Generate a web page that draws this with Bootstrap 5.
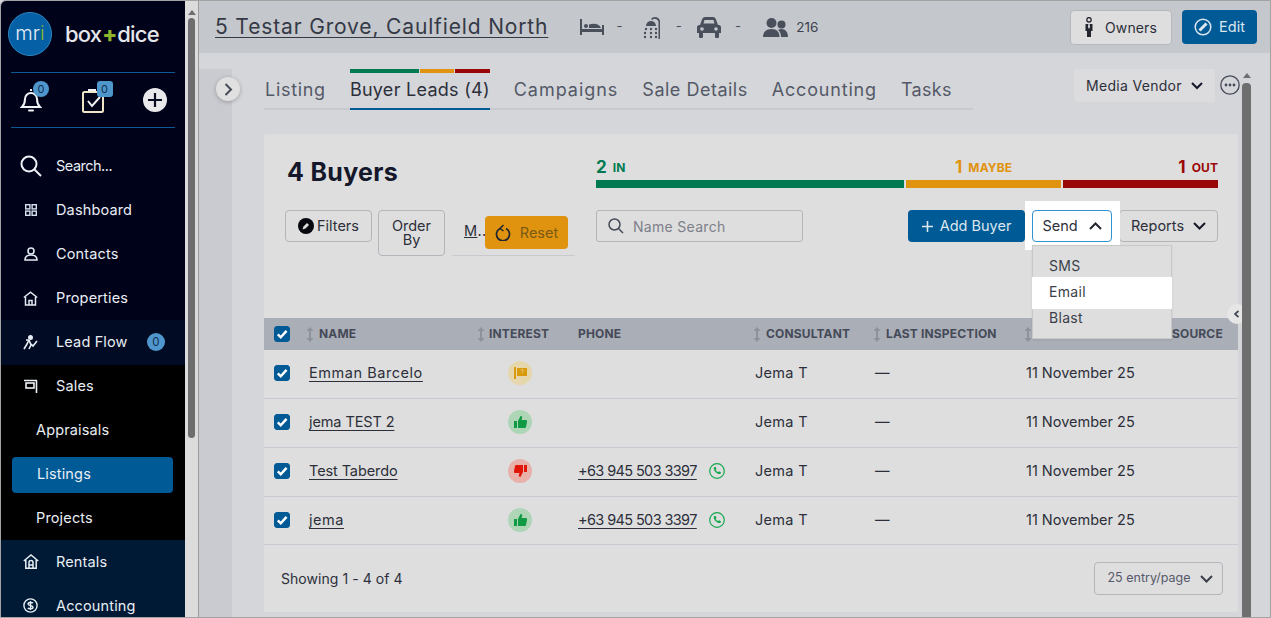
<!DOCTYPE html>
<html lang="en">
<head>
  <meta charset="UTF-8" />
  <title>5 Testar Grove - Buyer Leads</title>
  <link href="https://cdn.jsdelivr.net/npm/bootstrap@5.3.0/dist/css/bootstrap.min.css" rel="stylesheet"/>
  <style>
    html, body { height: 100%; }
    body {
      overflow: hidden;
      background: #d4d6da;
      font-family: "Inter", "Open Sans", sans-serif;
      font-size: 14.5px;
      letter-spacing: .3px;
      color: #2c2f3a;
    }
    svg { display: block; flex-shrink: 0; }
    .app-frame { height: 618px; border: 1px solid #a3a3a3; border-top-left-radius: 6px; overflow: hidden; }

    /* sidebar */
    .side-col { width: 184px; flex-shrink: 0; background: #00021a; color: #e9eef4; overflow: hidden; letter-spacing: .15px; }
    .brand-row { height: 71px; padding: 11px 0 0 7px; }
    .logo-disc {
      width: 44px; height: 44px; border-radius: 50%; background: #0660a6; border: 1px solid #2a86c0;
      color: #e6eef5; font-size: 20px; font-weight: 300; letter-spacing: 0; line-height: 40px; text-align: center;
    }
    .logo-disc em, .logo-word em { font-style: normal; color: #8fb52b; }
    .logo-word { font-size: 22px; font-weight: 500; letter-spacing: -.85px; margin-left: 13px; margin-top: -2px; color: #e4e6ea; }
    .logo-word em { font-weight: 800; margin: 0 1px; }
    .quick-row { margin: 0 10px; height: 56px; border-top: 1px solid #0b5a93; border-bottom: 1px solid #0b5a93; padding: 0 8px 0 9px; }
    .quick-item { position: relative; }
    .quick-count {
      position: absolute; top: -7px; right: -7px; min-width: 16px; height: 16px; border-radius: 50%;
      background: #4f96cc; color: #12314f; font-size: 11px; line-height: 16px; text-align: center; letter-spacing: 0;
    }
    .quick-count.sq { border-radius: 3px; right: -8px; }
    .side-list { padding-top: 16px; }
    .side-link { height: 44px; padding-left: 19px; gap: 15px; color: #e9eef4; text-decoration: none; }
    .side-link .ico-slot { width: 21px; display: flex; justify-content: center; }
    .side-link.flow-row { height: 45px; padding-bottom: 1px; background: #020b24; }
    .side-link.sub { padding-left: 35px; }
    .side-link.find-row { letter-spacing: -.5px; }
    .side-black { background: #000; }
    .side-black .side-link:first-child { height: 43px; padding-bottom: 1px; }
    .side-blue { background: #001a35; }
    .side-blue .side-link:first-child { height: 43px; }
    .side-blue .side-link:last-child { padding-top: 1px; }
    .side-active { height: 36px; margin: 5px 12px 3px 11px; padding: 0 0 2px 25px; background: #005a96; border-radius: 4px; color: #e9eef4; text-decoration: none; }
    .lead-count { width: 18px; height: 18px; border-radius: 50%; background: #4f96cc; color: #12314f; font-size: 11.5px; line-height: 18px; text-align: center; margin-left: auto; margin-right: 20px; letter-spacing: 0; }
    .side-scroll { width: 14px; flex-shrink: 0; background: #dcdcdc; border-right: 1px solid #9b9b9b; padding: 9px 3px 0 3px; }
    .scroll-up { width: 0; height: 0; border-left: 4px solid transparent; border-right: 4px solid transparent; border-bottom: 5px solid #6e6e6e; margin: 0 auto 3px; }
    .scroll-thumb { background: #6e6e6e; border-radius: 4px; }
    .side-scroll .scroll-thumb { height: 420px; }

    /* header */
    .main-col { min-width: 0; position: relative; }
    .top-bar { height: 52px; background: #c4c7cc; padding: 0 13px 0 16px; flex-shrink: 0; }
    .addr-link { font-size: 21px; letter-spacing: .85px; color: #353946; margin-right: 32px; text-decoration-thickness: 1px; text-underline-offset: 3px; }
    .stat-dash { color: #4a4f5c; font-size: 13px; }
    .dash-bed { margin: 0 20px 0 12px; }
    .dash-shower { margin: 0 15px 0 13px; }
    .dash-car { margin: 0 22px 0 14px; }
    .top-stat { color: #3c4150; font-size: 13.5px; margin-left: 8px; letter-spacing: 0; }
    .owner-btn { height: 35px; width: 102px; background: #dedede; border: 1px solid #b5b7bd; border-radius: 4px; color: #2c2f3a; font-size: 14px; gap: 12px; padding: 0; letter-spacing: .1px; }
    .edit-btn { height: 34px; width: 75px; background: #005a96; border: 0; border-radius: 4px; color: #dbe6ef; font-size: 14.5px; gap: 7px; padding: 0; margin-left: 10px; }

    /* body */
    .page-strip { width: 33px; flex-shrink: 0; margin-top: 16px; background: #c9cbd0; position: relative; }
    .strip-toggle {
      position: absolute; top: 8px; left: 17px; width: 24px; height: 24px; border-radius: 50%;
      background: #e0e0e0; box-shadow: 0 1px 4px rgba(0,0,0,.25); display: flex; align-items: center; justify-content: center;
    }
    .page-body { padding: 0 0 0 32px; min-width: 0; }
    .tab-row { height: 81px; padding-top: 16px; width: 976px; }
    .tab-list { width: 709px; height: 41px; border-bottom: 2px solid #c8cace; gap: 24px; }
    .tab-item { color: #545967; font-size: 18px; letter-spacing: .42px; text-decoration: none; padding-top: 7px; height: 41px; }
    .tab-item:nth-child(1) { letter-spacing: .7px; margin-left: 1px; }
    .tab-item:nth-child(2) { letter-spacing: .27px; }
    .tab-item:nth-child(3) { letter-spacing: .97px; }
    .tab-item:nth-child(4) { letter-spacing: .5px; }
    .tab-item:nth-child(5) { letter-spacing: .82px; }
    .tab-item:nth-child(6) { letter-spacing: .3px; }
    .tab-item.on { color: #2c2f3a; border-bottom: 2px solid #005a96; position: relative; }
    .tab-colors { position: absolute; top: 0; left: 0; right: 0; height: 4px; gap: 1px; }
    .tab-colors i { display: block; height: 4px; }
    .vendor-btn { width: 141px; height: 33px; background: #dcdcde; border-radius: 3px; font-size: 14px; margin-left: auto; gap: 9px; color: #2c2f3a; }
    .dots-ico { margin: 6px 0 0 5px; }

    .buyers-card { width: 974px; height: 478px; background: #dedede; border-radius: 2px; position: relative; }
    .buyers-head { padding: 22px 20px 0 23px; height: 76px; }
    .buyers-title { width: 309px; font-size: 25px; font-weight: 700; color: #15182a; line-height: 32px; margin: 0; letter-spacing: .3px; }
    .score-box { flex: 1; }
    .score-label { height: 24px; font-size: 12px; font-weight: 700; letter-spacing: .1px; }
    .score-label b { font-size: 17px; font-weight: 700; margin-right: 6px; }
    .score-bar { height: 8px; }
    .c-in { color: #007a50; } .c-maybe { color: #e0930f; } .c-out { color: #9a0707; }
    .b-in { background: #007a50; } .b-maybe { background: #e0930f; } .b-out { background: #9a0707; }
    .tool-row { padding: 0 20px 0 21px; height: 108px; }
    .plain-btn { background: transparent; border: 1px solid #b3b5bb; border-radius: 4px; color: #2c2f3a; font-size: 14.5px; padding: 0; line-height: 1; }
    .btn-filters { width: 87px; height: 32px; gap: 3px; }
    .btn-order { width: 67px; height: 46px; margin-left: 6px; }
    .saved-slot { width: 123px; height: 46px; margin-left: 7px; border-bottom: 1px solid #c9cad0; padding: 10px 0 0 12px; position: relative; color: #2c2f3a; }
    .reset-btn {
      position: absolute; left: 33px; top: 6px; width: 83px; height: 33px; background: #e0930f; border: 0; border-radius: 4px;
      color: #7b5b15; gap: 9px; padding: 0; font-size: 14.5px;
    }
    .search-wrap { width: 207px; height: 32px; margin-left: 21px; border: 1px solid #b3b5bb; border-radius: 3px; padding-left: 11px; gap: 9px; color: #7d808a; font-size: 14px; }
    .add-btn { width: 117px; height: 32px; background: #005a96; border: 0; border-radius: 4px; color: #dbe6ef; gap: 7px; padding: 0; margin-left: auto; font-size: 14.5px; }
    .send-halo { background: #fff; padding: 9px 8px 8px 7px; margin: -9px 0 -8px; position: relative; z-index: 3; }
    .send-btn { width: 80px; height: 32px; background: #fff; border: 1px solid #2f93cf; border-radius: 4px; color: #2c2f3a; gap: 11px; padding: 0; font-size: 14.5px; }
    .reports-btn { width: 99px; height: 32px; gap: 9px; margin-left: -1px; }
    .send-menu.dropdown-menu {
      top: 44px; left: 7px; width: 140px; min-width: 0; height: 94px; padding: 7px 0; margin: 0; z-index: 4; background: #dedede;
      border: 1px solid #c9c9c9; border-radius: 0; box-shadow: 0 1px 2px rgba(0,0,0,.08); font-size: 14px;
    }
    .send-menu .dropdown-item { height: 26px; line-height: 26px; padding: 0 0 0 16px; color: #3a3e4a; position: relative; }
    .send-menu .dropdown-item.lit::before { content: ""; position: absolute; left: -1px; right: -1px; top: -2px; bottom: -4px; background: #fff; }
    .send-menu .dropdown-item.lit span { position: relative; }

    .lead-table { margin: 0; table-layout: fixed; width: 974px; border-collapse: separate; border-spacing: 0; --bs-table-bg: transparent; --bs-table-color: #2c2f3a; font-size: 14.5px; }
    .lead-table thead th {
      height: 32px; padding: 0 0 0 6px; background: #aaaeb7; color: #454a58; font-size: 12px; font-weight: 700; letter-spacing: .15px; border: 0; vertical-align: middle; white-space: nowrap;
    }
    .lead-table tbody td { height: 49px; padding: 0 0 2px 9px; border-bottom: 1px solid #c8cad2; vertical-align: middle; }
    .lead-table tbody tr:last-child td { height: 48px; }
    .lead-table thead th.chk-col, .lead-table tbody td.chk-col { padding: 0 0 0 10px; }
    .lead-table tbody td.chk-col { padding-bottom: 2px; }
    .lead-table .form-check-input { width: 16px; height: 16px; margin: 0; display: block; border-radius: 3px; background-color: #005a96; border-color: #005a96; }
    .lead-table .form-check-input:checked[type=checkbox] {
      --bs-form-check-bg-image: url("data:image/svg+xml,%3csvg xmlns='http://www.w3.org/2000/svg' viewBox='0 0 20 20'%3e%3cpath fill='none' stroke='%23fff' stroke-width='3.6' d='M4 10.500l4.200 4.200L16.500 5.500'/%3e%3c/svg%3e");
    }
    .lead-table a { color: #2c2f3a; text-underline-offset: 3px; text-decoration-thickness: 1px; }
    .lead-table a.phone-link { letter-spacing: -.62px; }
    .lead-table a.name-wide { letter-spacing: .55px; }
    .lead-table a.name-tight { letter-spacing: -.1px; }
    .lead-table tbody td.phone-cell { padding-left: 8px; }
    .date-cell { letter-spacing: 0; }
    .sort-head { gap: 5px; }
    .th-sort-mid { margin-left: 1px; }
    .th-interest { gap: 4px; }
    .th-phone { padding-left: 8px !important; }
    .th-source { padding-left: 13px !important; }
    .mood { width: 24px; height: 24px; border-radius: 50%; margin-left: 29px; }
    .mood-up { background: #add5b6; } .mood-down { background: #e9afa9; } .mood-maybe { background: #e5d6ab; }
    .list-foot { height: 67px; padding: 0 15px 0 17px; font-size: 14px; letter-spacing: .05px; }
    .page-size { width: 129px; height: 33px; border: 1px solid #b3b5bb; border-radius: 4px; font-size: 12.5px; color: #55596a; gap: 10px; letter-spacing: 0; padding-left: 4px; }
    .edge-knob { position: absolute; top: 170px; right: -9px; width: 20px; height: 20px; border-radius: 50%; background: #e6e6e6; display: flex; align-items: center; padding-left: 7px; }

    .page-scroll { position: absolute; top: 72px; right: 19px; width: 9px; bottom: 0; }
    .page-scroll .scroll-up { border-left-width: 4px; margin: 0 auto 5px; }
    .page-scroll .scroll-thumb { height: 540px; border-radius: 4px 4px 0 0; }
  </style>
</head>
<body>
<div class="app-frame d-flex">

  <aside class="side-col">
    <div class="brand-row d-flex align-items-start">
      <div class="logo-disc">mr<em>i</em></div>
      <div class="logo-word pt-2">box<em>+</em>dice</div>
    </div>
    <div class="quick-row d-flex justify-content-between align-items-center">
      <div class="quick-item">
        <svg width="22" height="25" viewBox="0 0 22 25" fill="none" stroke="#f1f2f4" stroke-width="2"><path d="M11 1v2M2 19c2-2 3-4 3-8a6 6 0 0 1 12 0c0 4 1 6 3 8z"/><path d="M9 22.500h4" stroke-linecap="round"/></svg>
        <span class="quick-count">0</span>
      </div>
      <div class="quick-item">
        <svg width="24" height="25" viewBox="0 0 24 25" fill="none" stroke="#f1f2f4" stroke-width="2"><rect x="2" y="4" width="20" height="20" rx="1.500" stroke="#efe3c8"/><path d="M7 13l4 5 8-9"/><path d="M8 4V2h6v2"/></svg>
        <span class="quick-count sq">0</span>
      </div>
      <svg width="24" height="24" viewBox="0 0 24 24"><circle cx="12" cy="12" r="12" fill="#e9e9ec"/><path d="M12 5v14M5 12h14" stroke="#0a0d20" stroke-width="2.200"/></svg>
    </div>

    <nav class="side-list">
      <a class="side-link find-row d-flex align-items-center" href="#"><span class="ico-slot"><svg width="22" height="22" viewBox="0 0 22 22" fill="none" stroke="#eef1f5" stroke-width="2"><circle cx="9" cy="9" r="7.500"/><path d="M14.500 14.500L21 21"/></svg></span>Search...</a>
      <a class="side-link d-flex align-items-center" href="#"><span class="ico-slot"><svg width="12" height="12" viewBox="0 0 12 12" fill="none" stroke="#d6e3ee" stroke-width="1.400"><rect x=".7" y=".7" width="4.200" height="4.200"/><rect x="7.100" y=".7" width="4.200" height="4.200"/><rect x=".7" y="7.100" width="4.200" height="4.200"/><rect x="7.100" y="7.100" width="4.200" height="4.200"/></svg></span>Dashboard</a>
      <a class="side-link d-flex align-items-center" href="#"><span class="ico-slot"><svg width="14" height="14" viewBox="0 0 14 14" fill="none" stroke="#e2ebf3" stroke-width="1.600"><circle cx="7" cy="4" r="3"/><path d="M1 13c0-3 2-5 6-5s6 2 6 5z"/></svg></span>Contacts</a>
      <a class="side-link d-flex align-items-center" href="#"><span class="ico-slot"><svg width="15" height="15" viewBox="0 0 15 15" fill="none" stroke="#e2ebf3" stroke-width="1.500"><path d="M.8 6.500L7.500 1.200l6.700 5.300"/><path d="M2.500 6v8h10V6"/><path d="M6 14V9.500h3V14"/></svg></span>Properties</a>
      <a class="side-link flow-row d-flex align-items-center" href="#"><span class="ico-slot"><svg width="15" height="15" viewBox="0 0 15 15" fill="none" stroke="#e8edf3" stroke-width="1.600"><circle cx="7.500" cy="2.500" r="1.700" fill="#e8edf3"/><path d="M6 5L4 9l-3 5M6 5l2 5-2 4M6 5h-3M8 9l2 2 4-5"/></svg></span>Lead Flow<span class="lead-count">0</span></a>
      <div class="side-black">
        <a class="side-link d-flex align-items-center" href="#"><span class="ico-slot"><svg width="14" height="14" viewBox="0 0 14 14" fill="none" stroke="#eef1f5" stroke-width="1.600"><path d="M0 1.500h13M12.500 1.500V14"/><rect x="2" y="4" width="8" height="5"/></svg></span>Sales</a>
        <a class="side-link sub d-flex align-items-center" href="#">Appraisals</a>
        <a class="side-active d-flex align-items-center" href="#">Listings</a>
        <a class="side-link sub d-flex align-items-center" href="#">Projects</a>
      </div>
      <div class="side-blue">
        <a class="side-link d-flex align-items-center" href="#"><span class="ico-slot"><svg width="16" height="15" viewBox="0 0 16 15" fill="none" stroke="#e6edf3" stroke-width="1.500"><path d="M.8 7L8 1l7.200 6"/><path d="M2.800 6v8.200h10.400V6"/><path d="M6 14V8.500a2 2 0 0 1 4 0V14M6 11h4"/></svg></span>Rentals</a>
        <a class="side-link d-flex align-items-center" href="#"><span class="ico-slot"><svg width="15" height="15" viewBox="0 0 15 15" fill="none" stroke="#e6edf3" stroke-width="1.400"><circle cx="7.500" cy="7.500" r="6.600"/><path d="M10 5.200C9.400 4.400 5 4 5 6s5 1 5 3.200-4.600 1.600-5.200.6M7.500 3v9"/></svg></span>Accounting</a>
      </div>
    </nav>
  </aside>

  <div class="side-scroll">
    <div class="scroll-up"></div>
    <div class="scroll-thumb"></div>
  </div>

  <main class="main-col flex-grow-1 d-flex flex-column">
    <header class="top-bar d-flex align-items-center">
      <a href="#" class="addr-link">5 Testar Grove, Caulfield North</a>
      <svg width="24" height="16" viewBox="0 0 24 16" fill="#4a4f5c"><path d="M0 0h2v10h20V6h2v10h-2v-3H2v3H0z"/><circle cx="6" cy="7" r="2"/><path d="M9 5.500c5-1.500 10-1 12 3.500H9z"/></svg>
      <span class="stat-dash dash-bed">-</span>
      <svg width="20" height="24" viewBox="0 0 20 24" fill="#4a4f5c"><path d="M17 24V7a5 5 0 0 0-9-3l1.200 1a3.600 3.600 0 0 1 6.300 2v17z"/><path d="M3 11a5 5 0 0 1 10 0z"/><circle cx="3" cy="14" r="1.200"/><circle cx="8" cy="14" r="1.200"/><circle cx="13" cy="14" r="1.200"/><circle cx="2" cy="18" r="1.200"/><circle cx="8" cy="18" r="1.200"/><circle cx="13" cy="18" r="1.200"/><circle cx="2" cy="22" r="1.200"/><circle cx="8" cy="22" r="1.200"/><circle cx="13" cy="22" r="1.200"/></svg>
      <span class="stat-dash dash-shower">-</span>
      <svg width="24" height="21" viewBox="0 0 24 21" fill="#4a4f5c"><path d="M5 2.500C5.500 1 6.500 0 8 0h8c1.500 0 2.500 1 3 2.500L21 8h-18z"/><path d="M2 8c-1 0-2 1-2 2.500V16h2v4a1 1 0 0 0 1 1h2a1 1 0 0 0 1-1v-4h12v4a1 1 0 0 0 1 1h2a1 1 0 0 0 1-1v-4h2v-5.500C24 9 23 8 22 8z"/><circle cx="5" cy="12" r="1.800" fill="#c4c7cc"/><circle cx="19" cy="12" r="1.800" fill="#c4c7cc"/><path d="M7.500 3h9l1 3.500h-11z" fill="#c4c7cc"/></svg>
      <span class="stat-dash dash-car">-</span>
      <svg width="25" height="19" viewBox="0 0 25 19" fill="#4a4f5c"><circle cx="8.500" cy="5" r="5"/><circle cx="18.500" cy="6.500" r="4"/><path d="M0 19c0-5 3-8 8.500-8s8 3 8 8z"/><path d="M18 19c0-3-1-5.500-3-7 1-.6 2.300-1 3.500-1 4 0 6.500 3 6.500 8z"/></svg>
      <span class="top-stat">216</span>
      <button type="button" class="btn owner-btn d-flex align-items-center justify-content-center ms-auto">
        <svg width="8" height="20" viewBox="0 0 8 20" fill="#23262f"><circle cx="4" cy="2.800" r="2.200" fill="none" stroke="#23262f" stroke-width="1.300"/><path d="M.5 7h7v7H6v6H2v-6H.5z"/><path d="M3.400 7h1.200l.4 3-1 2-1-2z" fill="#dedede"/></svg>
        Owners
      </button>
      <button type="button" class="btn edit-btn d-flex align-items-center justify-content-center">
        <svg width="18" height="18" viewBox="0 0 18 18" fill="none" stroke="#dbe6ef" stroke-width="1.500"><circle cx="9" cy="9" r="7.800"/><path d="M5.500 12.500L12.500 5.500" stroke-width="3"/></svg>
        Edit
      </button>
    </header>

    <div class="d-flex flex-grow-1" style="min-height:0">
      <div class="page-strip">
        <span class="strip-toggle"><svg width="9" height="13" viewBox="0 0 9 13" fill="none" stroke="#454a58" stroke-width="2"><path d="M1.500 1l5.500 5.500-5.500 5.500"/></svg></span>
      </div>
      <div class="page-body flex-grow-1">
        <div class="tab-row d-flex align-items-start">
          <nav class="tab-list d-flex">
            <a class="tab-item" href="#">Listing</a>
            <a class="tab-item on" href="#">Buyer Leads (4)
              <span class="tab-colors d-flex">
                <i class="b-in" style="width: 50%"></i><i class="b-maybe" style="width: 25%"></i><i class="b-out" style="width: 25%"></i>
              </span>
            </a>
            <a class="tab-item" href="#">Campaigns</a>
            <a class="tab-item" href="#">Sale Details</a>
            <a class="tab-item" href="#">Accounting</a>
            <a class="tab-item" href="#">Tasks</a>
          </nav>
          <div class="vendor-btn d-flex align-items-center justify-content-center">Media Vendor
            <svg width="12" height="8" viewBox="0 0 12 8" fill="none" stroke="#15182a" stroke-width="2"><path d="M1 1l5 5 5-5"/></svg>
          </div>
          <svg class="dots-ico" width="20" height="20" viewBox="0 0 20 20"><circle cx="10" cy="10" r="9.200" fill="none" stroke="#454a58" stroke-width="1.300"/><circle cx="6" cy="10" r="1.400" fill="#454a58"/><circle cx="10" cy="10" r="1.400" fill="#454a58"/><circle cx="14" cy="10" r="1.400" fill="#454a58"/></svg>
        </div>

        <section class="buyers-card">
          <div class="buyers-head d-flex">
            <h2 class="buyers-title">4 Buyers</h2>
            <div class="score-box">
              <div class="d-flex" style="gap: 2px">
                <div style="width: 308px"><div class="score-label c-in d-flex align-items-center"><b>2</b> IN</div><div class="score-bar b-in"></div></div>
                <div style="width: 155px"><div class="score-label c-maybe d-flex align-items-center justify-content-center"><b>1</b> MAYBE</div><div class="score-bar b-maybe"></div></div>
                <div style="width: 155px"><div class="score-label c-out d-flex align-items-center justify-content-end"><b>1</b> OUT</div><div class="score-bar b-out"></div></div>
              </div>
            </div>
          </div>

          <div class="tool-row d-flex align-items-start">
            <button type="button" class="btn plain-btn btn-filters d-flex align-items-center justify-content-center">
              <svg width="16" height="16" viewBox="0 0 16 16"><circle cx="8" cy="8" r="8" fill="#07080f"/><path d="M4.500 11.500l1-3 3.500-3.500 2 2-3.500 3.500z" fill="#dedede"/></svg>
              Filters
            </button>
            <button type="button" class="btn plain-btn btn-order">Order<br>By</button>
            <div class="saved-slot">
              <a href="#" style="color:#2c2f3a">M</a>..
              <button type="button" class="btn reset-btn d-flex align-items-center justify-content-center">
                <svg width="16" height="17" viewBox="0 0 16 17" fill="none" stroke="#23262f" stroke-width="1.700"><path d="M5 4.500a6.500 6.500 0 1 0 6 0"/><path d="M8.500 1L5 4.500 8.500 7" stroke-width="1.500"/></svg>
                Reset
              </button>
            </div>
            <div class="search-wrap d-flex align-items-center">
              <svg width="16" height="16" viewBox="0 0 16 16" fill="none" stroke="#454a58" stroke-width="1.500"><circle cx="6.500" cy="6.500" r="5.500"/><path d="M10.500 10.500L15 15"/></svg>
              Name Search
            </div>
            <button type="button" class="btn add-btn d-flex align-items-center justify-content-center">
              <svg width="11" height="11" viewBox="0 0 11 11" fill="none" stroke="#dbe6ef" stroke-width="1.600"><path d="M5.500 0v11M0 5.500h11"/></svg>
              Add Buyer
            </button>
            <div class="send-halo">
              <button type="button" class="btn send-btn d-flex align-items-center justify-content-center">Send
                <svg width="13" height="8" viewBox="0 0 13 8" fill="none" stroke="#23262f" stroke-width="2"><path d="M1 7l5.500-5.500L12 7"/></svg>
              </button>
              <ul class="dropdown-menu show send-menu">
                <li><a class="dropdown-item" href="#"><span>SMS</span></a></li>
                <li><a class="dropdown-item lit" href="#"><span>Email</span></a></li>
                <li><a class="dropdown-item" href="#"><span>Blast</span></a></li>
              </ul>
            </div>
            <button type="button" class="btn plain-btn reports-btn d-flex align-items-center justify-content-center">Reports
              <svg width="13" height="8" viewBox="0 0 13 8" fill="none" stroke="#15182a" stroke-width="2"><path d="M1 1l5.500 5.500L12 1"/></svg>
            </button>
          </div>

          <table class="table lead-table">
            <colgroup>
              <col style="width: 36px"><col style="width: 170px"><col style="width: 100px"><col style="width: 176px">
              <col style="width: 120px"><col style="width: 151px"><col style="width: 142px"><col style="width: 79px">
            </colgroup>
            <thead>
              <tr>
                <th class="chk-col"><input class="form-check-input" type="checkbox" checked aria-label="All"></th>
                <th><span class="sort-head d-flex align-items-center"><svg width="8" height="15" viewBox="0 0 8 15" fill="#8e929c"><path d="M4 0l3.500 4h-2.500v7h2.500L4 15 .5 11H3V4H.5z"/></svg>NAME</span></th>
                <th><span class="sort-head th-sort-mid th-interest d-flex align-items-center"><svg width="8" height="15" viewBox="0 0 8 15" fill="#8e929c"><path d="M4 0l3.500 4h-2.500v7h2.500L4 15 .5 11H3V4H.5z"/></svg>INTEREST</span></th>
                <th class="th-phone">PHONE</th>
                <th><span class="sort-head th-sort-mid d-flex align-items-center"><svg width="8" height="15" viewBox="0 0 8 15" fill="#8e929c"><path d="M4 0l3.500 4h-2.500v7h2.500L4 15 .5 11H3V4H.5z"/></svg>CONSULTANT</span></th>
                <th><span class="sort-head th-sort-mid d-flex align-items-center"><svg width="8" height="15" viewBox="0 0 8 15" fill="#8e929c"><path d="M4 0l3.500 4h-2.500v7h2.500L4 15 .5 11H3V4H.5z"/></svg>LAST INSPECTION</span></th>
                <th><span class="sort-head th-sort-mid d-flex align-items-center"><svg width="8" height="15" viewBox="0 0 8 15" fill="#8e929c"><path d="M4 0l3.500 4h-2.500v7h2.500L4 15 .5 11H3V4H.5z"/></svg></span></th>
                <th class="th-source">SOURCE</th>
              </tr>
            </thead>
            <tbody>
              <tr>
                <td class="chk-col"><input class="form-check-input" type="checkbox" checked aria-label="Emman Barcelo"></td>
                <td><a class="name-wide" href="#">Emman Barcelo</a></td>
                <td><div class="mood mood-maybe d-flex align-items-center justify-content-center"><svg width="13" height="12" viewBox="0 0 13 12"><path d="M0 0h2v12H0z" fill="#d99a0c"/><path d="M3 1h10v8H3z" fill="#d99a0c"/><path d="M7 3.500a1.200 1.200 0 1 1 1.500 1.300V6" fill="none" stroke="#e5d6ab" stroke-width=".8"/></svg></div></td>
                <td></td>
                <td>Jema T</td>
                <td>—</td>
                <td class="date-cell" colspan="2">11 November 25</td>
              </tr>
              <tr>
                <td class="chk-col"><input class="form-check-input" type="checkbox" checked aria-label="jema TEST 2"></td>
                <td><a class="name-tight" href="#">jema TEST 2</a></td>
                <td><div class="mood mood-up d-flex align-items-center justify-content-center"><svg width="13" height="12" viewBox="0 0 13 12" fill="#0f9a43"><path d="M0 5h3v7H0z"/><path d="M4 5l2.500-5c1.500 0 2 1 1.500 2.500L7.500 4H12c1 0 1.200 1 1 2l-1 5c-.2.700-.6 1-1.500 1H4z"/></svg></div></td>
                <td></td>
                <td>Jema T</td>
                <td>—</td>
                <td class="date-cell" colspan="2">11 November 25</td>
              </tr>
              <tr>
                <td class="chk-col"><input class="form-check-input" type="checkbox" checked aria-label="Test Taberdo"></td>
                <td><a class="name-tight" href="#">Test Taberdo</a></td>
                <td><div class="mood mood-down d-flex align-items-center justify-content-center"><svg width="13" height="12" viewBox="0 0 13 12" fill="#e01708"><path d="M10 0h3v7h-3z"/><path d="M9 7l-2.500 5C5 12 4.500 11 5 9.500L5.500 8H1C0 8-.2 7 0 6l1-5C1.200.3 1.600 0 2.500 0H9z"/></svg></div></td>
                <td class="phone-cell"><div class="d-flex align-items-center gap-2"><a class="phone-link" href="#">+63 945 503 3397</a><svg class="ms-1" width="16" height="16" viewBox="0 0 16 16" fill="none"><circle cx="8" cy="8" r="7.300" stroke="#14a84e" stroke-width="1.200"/><path d="M4.800 4.500l1.600-.8 1.200 2-.9 1c.4 1.100 1.300 2 2.400 2.400l1-.9 2 1.200-.8 1.600c-3.400.4-6.800-3-6.500-6.500z" fill="#14a84e"/></svg></div></td>
                <td>Jema T</td>
                <td>—</td>
                <td class="date-cell" colspan="2">11 November 25</td>
              </tr>
              <tr>
                <td class="chk-col"><input class="form-check-input" type="checkbox" checked aria-label="jema"></td>
                <td><a class="name-wide" href="#">jema</a></td>
                <td><div class="mood mood-up d-flex align-items-center justify-content-center"><svg width="13" height="12" viewBox="0 0 13 12" fill="#0f9a43"><path d="M0 5h3v7H0z"/><path d="M4 5l2.500-5c1.500 0 2 1 1.500 2.500L7.500 4H12c1 0 1.200 1 1 2l-1 5c-.2.700-.6 1-1.500 1H4z"/></svg></div></td>
                <td class="phone-cell"><div class="d-flex align-items-center gap-2"><a class="phone-link" href="#">+63 945 503 3397</a><svg class="ms-1" width="16" height="16" viewBox="0 0 16 16" fill="none"><circle cx="8" cy="8" r="7.300" stroke="#14a84e" stroke-width="1.200"/><path d="M4.800 4.500l1.600-.8 1.200 2-.9 1c.4 1.100 1.300 2 2.400 2.400l1-.9 2 1.200-.8 1.600c-3.400.4-6.800-3-6.500-6.500z" fill="#14a84e"/></svg></div></td>
                <td>Jema T</td>
                <td>—</td>
                <td class="date-cell" colspan="2">11 November 25</td>
              </tr>
            </tbody>
          </table>

          <div class="list-foot d-flex align-items-center justify-content-between">
            <span>Showing 1 - 4 of 4</span>
            <div class="page-size d-flex align-items-center justify-content-center">25 entry/page
              <svg width="13" height="8" viewBox="0 0 13 8" fill="none" stroke="#3a3e4a" stroke-width="2"><path d="M1 1l5.500 5.500L12 1"/></svg>
            </div>
          </div>
          <span class="edge-knob"><svg width="5" height="8" viewBox="0 0 5 8" fill="none" stroke="#454a58" stroke-width="1.800"><path d="M4.500 1L1 4l3.500 3"/></svg></span>
        </section>
      </div>
    </div>

    <div class="page-scroll">
      <div class="scroll-up"></div>
      <div class="scroll-thumb"></div>
    </div>
  </main>
</div>
</body>
</html>
